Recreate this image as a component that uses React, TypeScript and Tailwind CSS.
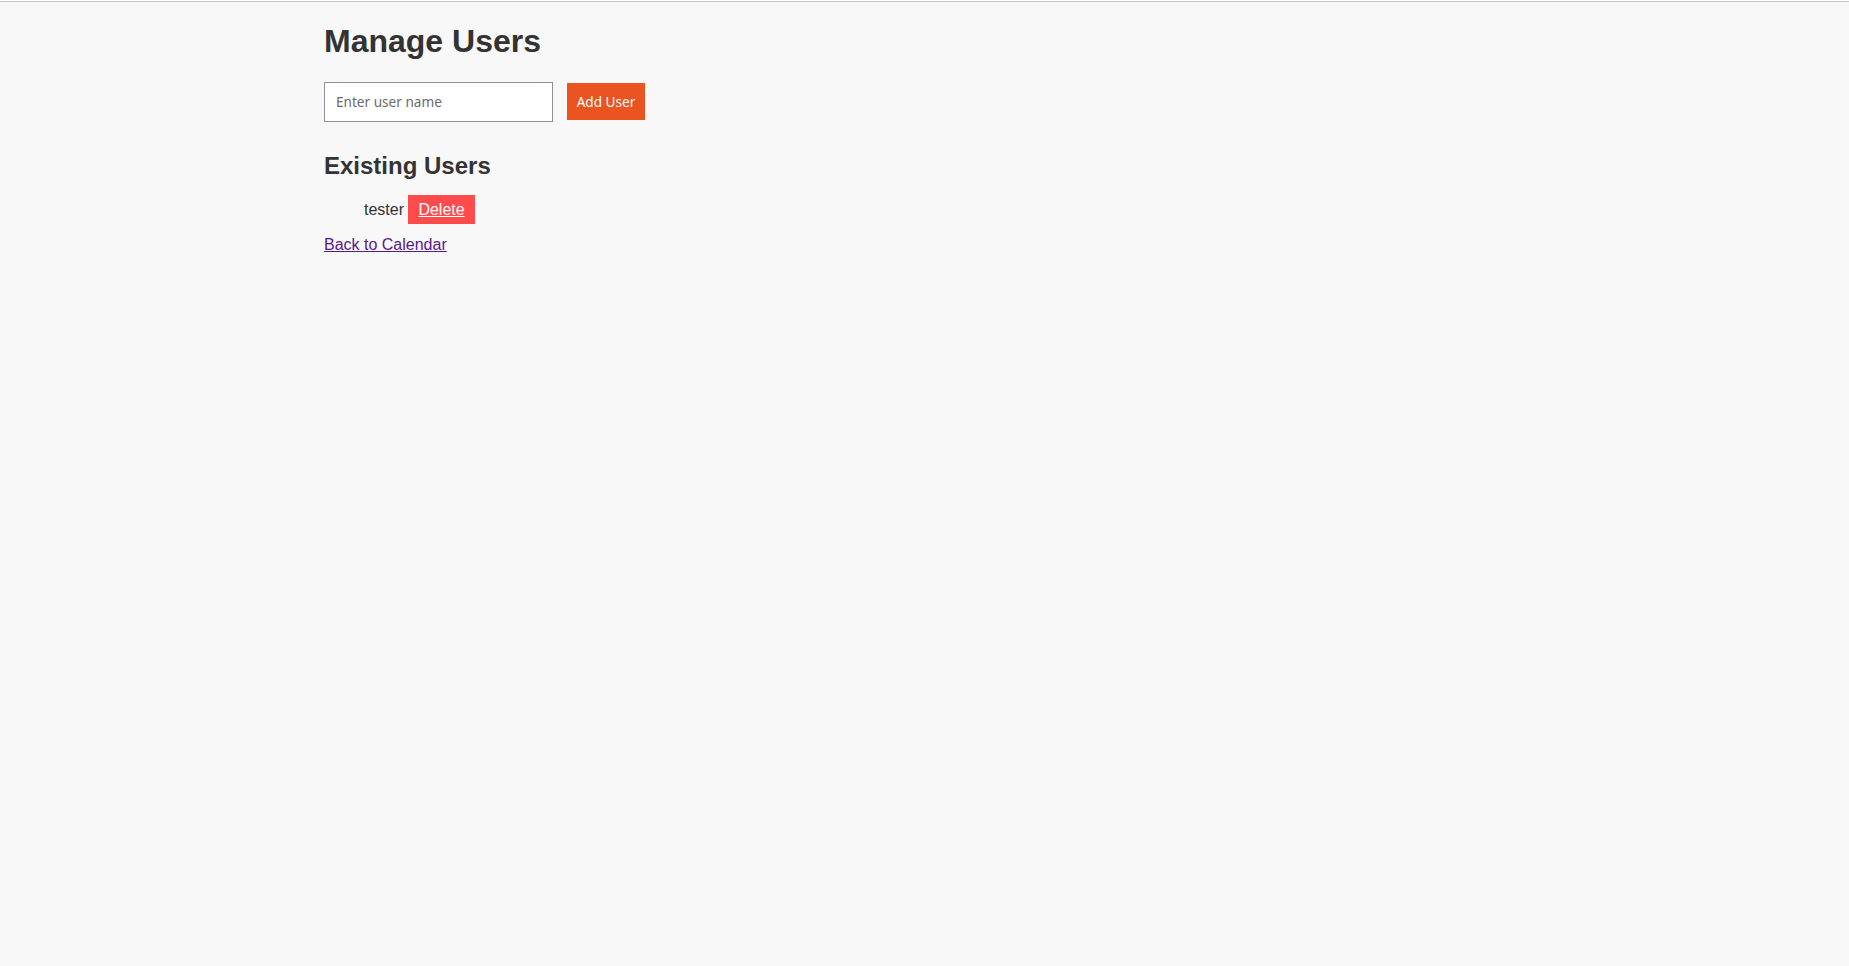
import { useState } from "react";

export default function App() {
  const [name, setName] = useState("");
  const [users, setUsers] = useState<string[]>(["tester"]);

  return (
    <div className="min-h-screen bg-[#f8f8f8] font-['Liberation_Sans',Arial,sans-serif] text-[#333]">
      <div className="h-px mt-px bg-[#c6c6c6]" />
      <div className="mx-auto max-w-[1201px]">
        <h1 className="mt-[21px] text-[32px] leading-[1.15] font-bold">
          Manage Users
        </h1>

        <form
          onSubmit={(e) => {
            e.preventDefault();
            if (name.trim()) {
              setUsers([...users, name.trim()]);
              setName("");
            }
          }}
          className="mt-[22px] flex items-center gap-[14px]"
        >
          <input
            value={name}
            onChange={(e) => setName(e.target.value)}
            placeholder="Enter user name"
            className="h-[40px] w-[229px] bg-white border border-[#8f8f9d] px-[11px] text-[13.6px] font-['Noto_Sans',sans-serif] text-[#333] placeholder:text-[#6b6b6b] outline-none"
          />
          <button
            type="submit"
            className="h-[37px] w-[78px] bg-[#e95420] text-white text-[13.6px] font-['Noto_Sans',sans-serif]"
          >
            Add User
          </button>
        </form>

        <h2 className="mt-[30px] text-[24px] leading-[1.15] font-bold">
          Existing Users
        </h2>

        <ul className="mt-[16px] pl-[40px]">
          {users.map((user) => (
            <li key={user} className="flex items-center gap-[4px] text-[16px]">
              <span>{user}</span>
              <button
                onClick={() => setUsers(users.filter((u) => u !== user))}
                className="h-[29px] w-[67px] bg-[#ff4b4b] text-white text-[16px] underline"
              >
                Delete
              </button>
            </li>
          ))}
        </ul>

        <a
          href="#"
          className="mt-[12px] inline-block text-[16px] leading-[1.15] text-[#551a8b] underline"
        >
          Back to Calendar
        </a>
      </div>
    </div>
  );
}
